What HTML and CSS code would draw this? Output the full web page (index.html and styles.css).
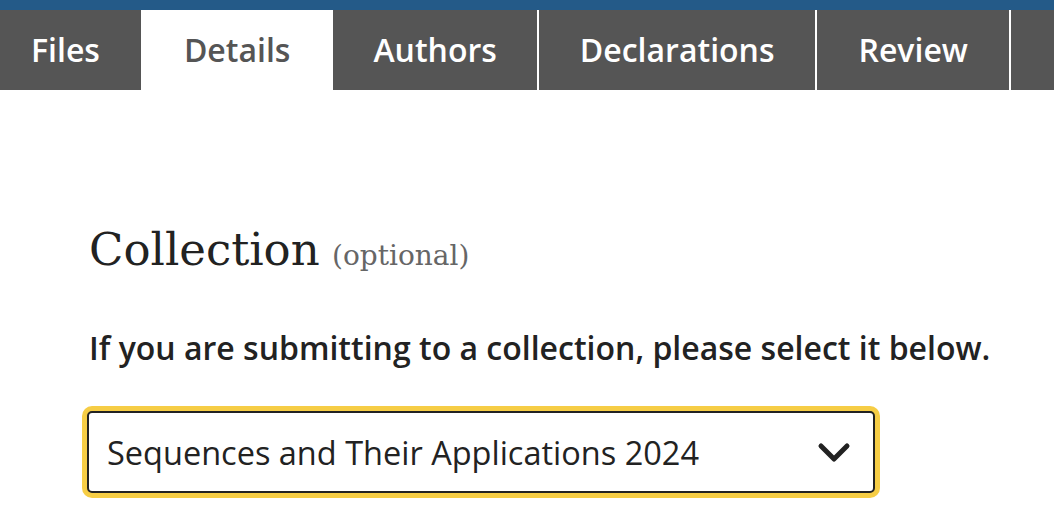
FILE: index.html
```html
<!DOCTYPE html>
<html lang="en">
<head>
<meta charset="utf-8">
<title>Submission details</title>
<link rel="stylesheet" href="styles.css">
</head>
<body>
<div class="topbar"></div>
<nav class="tabs">
  <a class="tab tab-first">Files</a>
  <a class="tab tab-active">Details</a>
  <a class="tab tab-narrow">Authors</a>
  <a class="tab tab-sep">Declarations</a>
  <a class="tab tab-sep">Review</a>
  <span class="tab-rest tab-sep"></span>
</nav>
<main class="content">
  <h2 class="heading">Collection <span class="optional">(optional)</span></h2>
  <p class="hint">If you are submitting to a collection, please select it below.</p>
  <div class="select-wrap">
    <div class="select">
      <span class="select-value">Sequences and Their Applications 2024</span>
      <svg class="chevron" width="34" height="22" viewBox="0 0 34 22" aria-hidden="true">
        <path d="M4 5 L17 18 L30 5" fill="none" stroke="#222" stroke-width="5" stroke-linecap="round" stroke-linejoin="round"/>
      </svg>
    </div>
  </div>
</main>
</body>
</html>
```
FILE: styles.css
```css
* { box-sizing: border-box; }
html, body { margin: 0; padding: 0; background: #fff; }
body { font-family: "Open Sans", "Noto Sans", sans-serif; color: #222; }

.topbar { height: 10px; background: #245a88; }

.tabs {
  display: flex;
  height: 80px;
  background: #555;
}
.tab {
  display: flex;
  align-items: center;
  padding: 0 41px 2px;
  color: #fff;
  font-size: 32px;
  font-weight: 600;
  white-space: nowrap;
}
.tab-first { padding-left: 31px; padding-right: 41px; }
.tab-active { background: #fff; color: #555; padding-left: 43px; padding-right: 43px; }
.tab-narrow { padding-left: 40px; padding-right: 40px; }
.tab-sep { border-left: 2px solid #fff; }
.tab-rest { flex: 1; }

.content { padding: 130px 0 0 89px; }

.heading {
  margin: 0;
  font-family: "DejaVu Serif", "Liberation Serif", serif;
  font-weight: 400;
  font-size: 45px;
  line-height: 60px;
  color: #222;
}
.optional { font-size: 28px; color: #666; margin-left: -2px; }

.hint {
  margin: 42px 0 0;
  font-size: 32px;
  font-weight: 600;
  line-height: 40px;
}

.select-wrap {
  margin: 38px 0 0 -7px;
  width: 798px;
  padding: 5px;
  border-radius: 10px;
  background: #f6cd45;
}
.select {
  display: flex;
  align-items: center;
  justify-content: space-between;
  height: 82px;
  padding: 0 22px 0 18px;
  border: 2px solid #222;
  border-radius: 5px;
  background: #fff;
}
.select-value { font-size: 32.5px; font-weight: 500; }
.chevron { display: block; }
```
